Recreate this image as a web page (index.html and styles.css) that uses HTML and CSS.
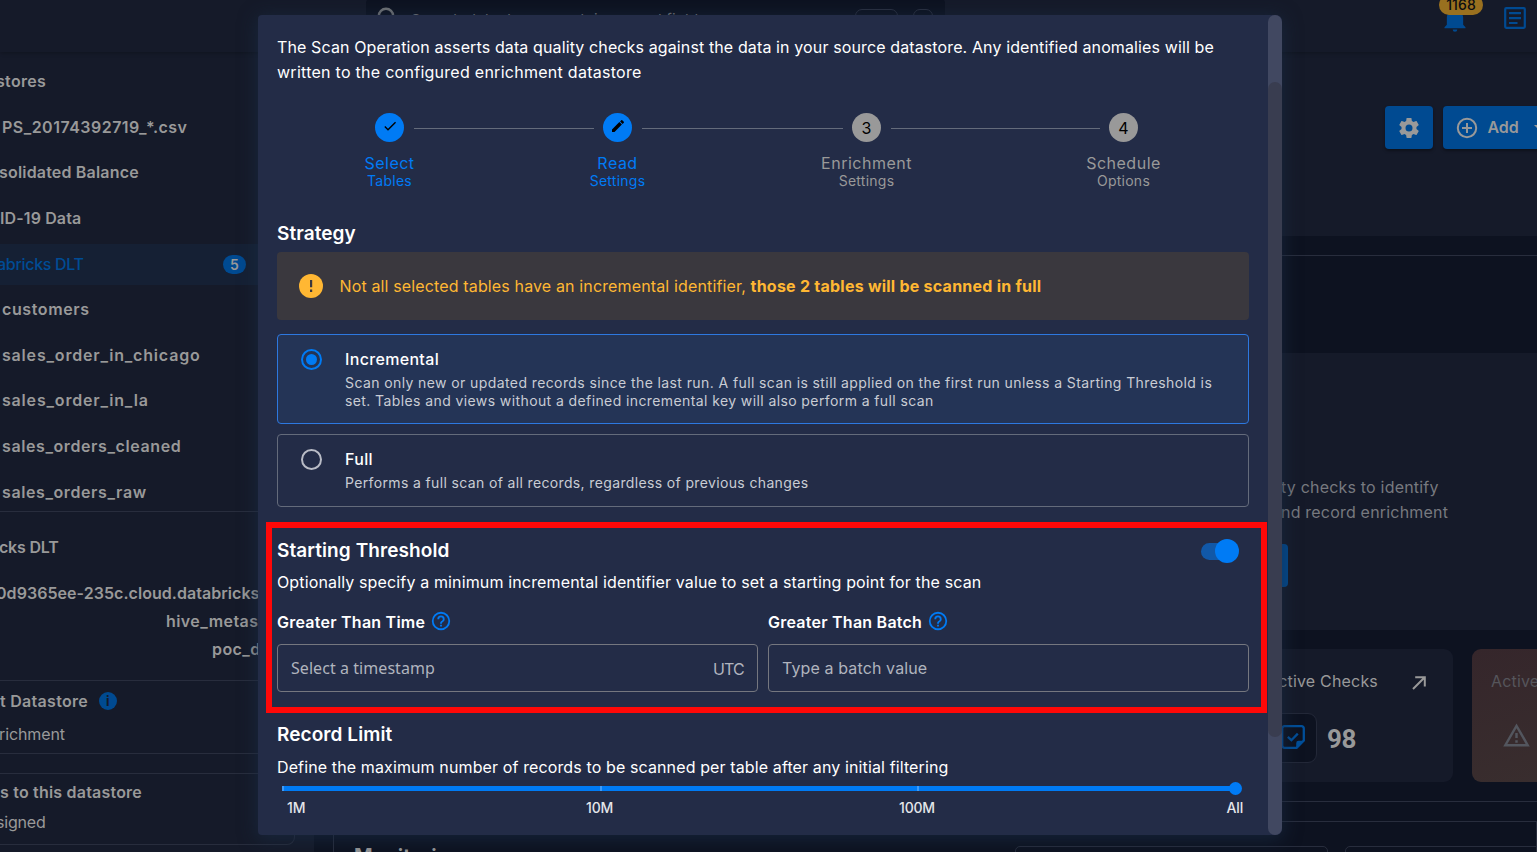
FILE: index.html
```html
<!DOCTYPE html>
<html lang="en">
<head>
<meta charset="utf-8">
<title>Scan Operation</title>
<link rel="stylesheet" href="styles.css">
</head>
<body>
<div class="app">
  <header class="topbar">
    <div class="search">
      <svg class="search-icon" viewBox="0 0 24 24"><circle cx="10" cy="10" r="7.2"/><path d="M15.5 15.5 22 22"/></svg>
      <span class="search-text">Search datastores, containers and fields</span>
      <span class="key key-wide"></span><span class="key"></span>
    </div>
    <div class="bell">
      <svg viewBox="0 0 24 24"><path d="M21,19V20H3V19L5,17V11C5,7.9 7.03,5.17 10,4.29C10,4.19 10,4.1 10,4A2,2 0 0,1 12,2A2,2 0 0,1 14,4C14,4.1 14,4.19 14,4.29C16.97,5.17 19,7.9 19,11V17L21,19M14,21A2,2 0 0,1 12,23A2,2 0 0,1 10,21"/></svg>
      <span class="bell-count">1168</span>
    </div>
    <svg class="doc-icon" viewBox="0 0 22 22"><rect x="1.2" y="1.2" width="19.6" height="19.6" rx="1"/><path d="M5 6.2h12M5 11.2h12M5 16h8.5"/></svg>
  </header>
  <div class="body">
    <aside class="sidebar">
      <nav class="tree">
        <div class="row cut-a">stores</div>
        <div class="row file">PS_20174392719_*.csv</div>
        <div class="row cut-b">solidated Balance</div>
        <div class="row">ID-19 Data</div>
        <div class="row active"><span class="cut-c">abricks DLT</span><span class="count">5</span></div>
        <div class="row table">customers</div>
        <div class="row table long">sales_order_in_chicago</div>
        <div class="row table long">sales_order_in_la</div>
        <div class="row table">sales_orders_cleaned</div>
        <div class="row table">sales_orders_raw</div>
      </nav>
      <section class="store-info">
        <div class="info-title">cks DLT</div>
        <div class="host">0d9365ee-235c.cloud.databricks</div>
        <div class="meta">hive_metas</div>
        <div class="meta schema">poc_d</div>
      </section>
      <section class="enrich">
        <div class="enrich-title">t Datastore <span class="info">i</span></div>
        <div class="enrich-value">richment</div>
      </section>
      <section class="tags">
        <div class="tags-title">s to this datastore</div>
        <div class="tags-value">signed</div>
      </section>
    </aside>
    <main class="main">
      <section class="page-head">
        <button class="btn gear"><svg viewBox="0 0 24 24"><path d="M12,15.5A3.5,3.5 0 0,1 8.5,12A3.5,3.5 0 0,1 12,8.5A3.5,3.5 0 0,1 15.5,12A3.5,3.5 0 0,1 12,15.5M19.43,12.97C19.47,12.65 19.5,12.33 19.5,12C19.5,11.67 19.47,11.34 19.43,11L21.54,9.37C21.73,9.22 21.78,8.95 21.66,8.73L19.66,5.27C19.54,5.05 19.27,4.96 19.05,5.05L16.56,6.05C16.04,5.66 15.5,5.32 14.87,5.07L14.5,2.42C14.46,2.18 14.25,2 14,2H10C9.75,2 9.54,2.18 9.5,2.42L9.13,5.07C8.5,5.32 7.96,5.66 7.44,6.05L4.95,5.05C4.73,4.96 4.46,5.05 4.34,5.27L2.34,8.73C2.21,8.95 2.27,9.22 2.46,9.37L4.57,11C4.53,11.34 4.5,11.67 4.5,12C4.5,12.33 4.53,12.65 4.57,12.97L2.46,14.63C2.27,14.78 2.21,15.05 2.34,15.27L4.34,18.73C4.46,18.95 4.73,19.03 4.95,18.95L7.44,17.94C7.96,18.34 8.5,18.68 9.13,18.93L9.5,21.58C9.54,21.82 9.75,22 10,22H14C14.25,22 14.46,21.82 14.5,21.58L14.87,18.93C15.5,18.67 16.04,18.34 16.56,17.94L19.05,18.95C19.27,19.03 19.54,18.95 19.66,18.73L21.66,15.27C21.78,15.05 21.73,14.78 21.54,14.63L19.43,12.97Z"/></svg></button>
        <button class="btn add"><svg class="plus" viewBox="0 0 22 22"><circle cx="11" cy="11" r="9.2"/><path d="M11 6v10M6 11h10"/></svg><span>Add</span><svg class="chev" viewBox="0 0 10 6"><path d="M0 0h10L5 5z"/></svg></button>
      </section>
      <div class="strip"></div>
      <section class="panel">
        <p class="panel-text">ty checks to identify<br>nd record enrichment</p>
        <div class="panel-btn"></div>
      </section>
      <section class="stats">
        <div class="stat">
          <div class="stat-head"><span>Active Checks</span><svg viewBox="0 0 14 14"><path d="M1 13 12.5 1.5M3.2 1.2h9.6v9.4"/></svg></div>
          <div class="stat-body">
            <div class="stat-icon"><svg viewBox="0 0 24 24"><path class="note" d="M15.6 22.8H3.4A2.2 2.2 0 0 1 1.2 20.6V3.4A2.2 2.2 0 0 1 3.4 1.2h17.2a2.2 2.2 0 0 1 2.2 2.2v12.2z"/><path class="fold" d="M15.2 23.5v-5.3a2.4 2.4 0 0 1 2.4-2.4h6z"/><path class="tick" d="m6.8 11.8 3.6 3.4 6.4-6.6"/></svg></div>
            <span class="stat-num">98</span>
          </div>
        </div>
        <div class="stat anomalies">
          <div class="stat-head">Active Anomalies</div>
          <svg class="warn" viewBox="0 0 24 24"><path d="M12,2L1,21H23M12,6L19.53,19H4.47M11,10V14H13V10M11,16V18H13V16"/></svg>
        </div>
      </section>
      <section class="monitor-wrap">
        <div class="monitor">
          <span class="monitor-title">Monitoring</span>
          <div class="tile tile-a"></div>
          <div class="tile tile-b"></div>
        </div>
      </section>
    </main>
  </div>

  <div class="dialog">
    <div class="content">
      <p class="intro">The Scan Operation asserts data quality checks against the data in your source datastore. Any identified anomalies will be<br><span class="intro-2">written to the configured enrichment datastore</span></p>
      <div class="stepper">
        <div class="step done">
          <div class="dot"><svg viewBox="0 0 24 24"><path d="M21,7L9,19L3.5,13.5L4.91,12.09L9,16.17L19.59,5.59L21,7Z"/></svg></div>
          <div class="step-1">Select</div><div class="step-2">Tables</div>
        </div>
        <div class="line line-a"></div>
        <div class="step done">
          <div class="dot"><svg class="pencil" viewBox="0 0 24 24"><path d="M20.71,7.04C21.1,6.65 21.1,6 20.71,5.63L18.37,3.29C18,2.9 17.35,2.9 16.96,3.29L15.12,5.12L18.87,8.87M3,17.25V21H6.75L17.81,9.93L14.06,6.18L3,17.25Z"/></svg></div>
          <div class="step-1">Read</div><div class="step-2">Settings</div>
        </div>
        <div class="line line-b"></div>
        <div class="step">
          <div class="dot">3</div>
          <div class="step-1">Enrichment</div><div class="step-2">Settings</div>
        </div>
        <div class="line line-c"></div>
        <div class="step">
          <div class="dot">4</div>
          <div class="step-1">Schedule</div><div class="step-2">Options</div>
        </div>
      </div>

      <h2 class="title">Strategy</h2>
      <div class="alert">
        <svg viewBox="0 0 24 24"><circle cx="12" cy="12" r="12"/><path d="M11 6h2.2v7.2H11zM11 15.6h2.2v2.3H11z"/></svg>
        <span>Not all selected tables have an incremental identifier, <b>those 2 tables will be scanned in full</b></span>
      </div>
      <div class="option selected">
        <span class="radio"></span>
        <div>
          <div class="option-name">Incremental</div>
          <div class="option-desc">Scan only new or updated records since the last run. A full scan is still applied on the first run unless a Starting Threshold is<br>set. Tables and views without a defined incremental key will also perform a full scan</div>
        </div>
      </div>
      <div class="option">
        <span class="radio"></span>
        <div>
          <div class="option-name">Full</div>
          <div class="option-desc option-full">Performs a full scan of all records, regardless of previous changes</div>
        </div>
      </div>

      <div class="threshold-head"><h2 class="title">Starting Threshold</h2><span class="toggle"><i></i></span></div>
      <p class="text">Optionally specify a minimum incremental identifier value to set a starting point for the scan</p>
      <div class="fields">
        <div class="field">
          <label>Greater Than Time <svg viewBox="0 0 24 24"><path d="M11,18H13V16H11V18M12,2A10,10 0 0,0 2,12A10,10 0 0,0 12,22A10,10 0 0,0 22,12A10,10 0 0,0 12,2M12,20C7.59,20 4,16.41 4,12C4,7.59 7.59,4 12,4C16.41,4 20,7.59 20,12C20,16.41 16.41,20 12,20M12,6A4,4 0 0,0 8,10H10A2,2 0 0,1 12,8A2,2 0 0,1 14,10C14,12 11,11.75 11,15H13C13,12.75 16,12.5 16,10A4,4 0 0,0 12,6Z"/></svg></label>
          <div class="input"><span class="stamp">Select a timestamp</span><span class="utc">UTC</span></div>
        </div>
        <div class="field">
          <label>Greater Than Batch <svg viewBox="0 0 24 24"><path d="M11,18H13V16H11V18M12,2A10,10 0 0,0 2,12A10,10 0 0,0 12,22A10,10 0 0,0 22,12A10,10 0 0,0 12,2M12,20C7.59,20 4,16.41 4,12C4,7.59 7.59,4 12,4C16.41,4 20,7.59 20,12C20,16.41 16.41,20 12,20M12,6A4,4 0 0,0 8,10H10A2,2 0 0,1 12,8A2,2 0 0,1 14,10C14,12 11,11.75 11,15H13C13,12.75 16,12.5 16,10A4,4 0 0,0 12,6Z"/></svg></label>
          <div class="input">Type a batch value</div>
        </div>
      </div>

      <h2 class="title limit">Record Limit</h2>
      <p class="text limit-text">Define the maximum number of records to be scanned per table after any initial filtering</p>
      <div class="slider"><i class="tick-mark"></i><i class="tick-mark"></i><i class="tick-mark"></i><span class="thumb"></span></div>
      <div class="scale"><span>1M</span><span>10M</span><span>100M</span><span>All</span></div>
    </div>
    <div class="scrollbar"><div class="scroll-thumb"></div></div>
  </div>
  <div class="highlight"></div>
</div>
</body>
</html>
```
FILE: styles.css
```css
* { box-sizing: border-box; }
html, body { margin: 0; height: 100%; overflow: hidden; }
body { font: 400 16px/24px Inter, "Liberation Sans", sans-serif; letter-spacing: .12px; background: #0d1220; color: #fff; }
p, h2 { margin: 0; }
svg { display: block; flex: none; }
.app { position: relative; width: 1537px; height: 852px; overflow: hidden; display: flex; flex-direction: column; white-space: nowrap; color: #999; }

/* top bar */
.topbar { height: 52px; flex: none; background: #151a29; display: flex; box-shadow: 0 1px 4px rgba(0,0,0,.25); position: relative; padding-left: 366px; }
.search { width: 579px; height: 40px; margin-top: -2px; background: #0d1220; border-radius: 5px; display: flex; color: #737578; font-size: 15px; padding-left: 10px; flex: none; }
.search-icon { width: 24px; height: 24px; margin-top: 8px; fill: none; stroke: #737578; stroke-width: 2.4; }
.search-text { margin: 10px 0 0 11px; letter-spacing: .25px; width: 444px; }
.key { width: 20px; height: 24px; margin-top: 11px; border: 1px solid #2b3040; border-radius: 7px; }
.key-wide { width: 43px; margin-right: 15px; }
.bell { margin: 5px 0 0 496px; width: 28px; height: 28px; position: relative; }
.bell svg { width: 28px; height: 28px; fill: #004a91; }
.bell-count { position: absolute; left: -2px; top: -10px; width: 44px; height: 20px; border-radius: 10px; background: #99701f; color: #0b0c10; font: 500 14px/20px Inter, sans-serif; text-align: center; }
.doc-icon { width: 22px; height: 22px; margin: 7px 0 0 35px; fill: none; stroke: #004a91; stroke-width: 2.2; }
.body { flex: 1; display: flex; min-height: 0; }

/* sidebar */
.sidebar { width: 314px; flex: none; background: #151a29; padding-top: 9.2px; }
.tree { display: flex; flex-direction: column; gap: 4.6px; height: 449.8px; }
.row { height: 41px; flex: none; line-height: 41px; font-weight: 600; }
.cut-a { text-indent: -4px; letter-spacing: .3px; }
.cut-b { text-indent: -1px; letter-spacing: .18px; }
.file { padding-left: 2px; letter-spacing: .48px; }
.table { padding-left: 2px; letter-spacing: .6px; }
.table.long { letter-spacing: .82px; }
.active { background: #152034; color: #004c95; display: flex; align-items: center; }
.cut-c { width: 226px; margin-left: -3px; font-weight: 500; letter-spacing: -.3px; }
.count { width: 23px; height: 19px; border-radius: 10px; background: #004a91; color: #999; font-size: 14px; line-height: 19px; text-align: center; }
.store-info { border-top: 1px solid #282d3d; height: 169px; font-weight: 600; padding-top: 23px; }
.info-title { text-indent: -1px; letter-spacing: -.2px; height: 46px; }
.host { text-indent: -4px; letter-spacing: .05px; height: 28px; width: 258px; }
.meta { padding-left: 166px; height: 28px; letter-spacing: .42px; }
.schema { padding-left: 212px; }
.enrich { border-top: 1px solid #282d3d; border-bottom: 1px solid #282d3d; height: 74px; padding-top: 8px; }
.enrich-title { display: flex; font-weight: 600; gap: 11px; letter-spacing: .29px; height: 33px; }
.info { width: 18px; height: 18px; border-radius: 50%; background: #004a91; color: #151a29; font: 700 13px/18px Inter, sans-serif; text-align: center; margin-top: 3px; }
.enrich-value { text-indent: -1px; letter-spacing: -.1px; }
.tags { border: 1px solid #282d3d; border-left: 0; border-radius: 0 8px 8px 0; width: 295px; height: 72px; margin-top: 19px; padding-top: 6px; }
.tags-title { font-weight: 600; letter-spacing: .2px; height: 30px; }
.tags-value { text-indent: -4px; letter-spacing: -.2px; }

/* page */
.main { flex: 1; min-width: 0; overflow: hidden; }
.page-head { height: 184px; background: #151a29; padding: 54px 0 0 1071px; display: flex; gap: 10px; }
.btn { height: 43px; border: 0; border-radius: 4px; background: #004a91; color: #999; display: flex; align-items: center; flex: none; box-shadow: 0 2px 3px rgba(0,0,0,.35); font: 600 16px Inter, sans-serif; padding: 0; }
.gear { width: 48px; justify-content: center; }
.gear svg { width: 24px; height: 24px; fill: #999; }
.add { width: 130px; padding-left: 13px; }
.plus { width: 22px; height: 22px; fill: none; stroke: #999; stroke-width: 2; }
.add span { margin: -2px 15px 0 9px; width: 32px; letter-spacing: -.1px; }
.chev { width: 10px; height: 6px; fill: #999; }
.strip { height: 98px; margin: 19px 0 0; border-top: 1px solid #282d3d; }
.panel { height: 277px; background: #151a29; padding: 122px 0 0 967px; }
.panel-text { color: #77797f; line-height: 25px; letter-spacing: .2px; }
.panel-btn { width: 7px; height: 43px; margin-top: 19px; background: #004a91; border-radius: 0 4px 4px 0; }
.stats { display: flex; gap: 19px; padding: 19px 0 0 866px; }
.stat { width: 273px; height: 133px; flex: none; background: #151a29; border-radius: 9px; padding: 20px 27px 0 87px; }
.stat-head { display: flex; justify-content: space-between; align-items: center; letter-spacing: .18px; height: 24px; }
.stat-head svg { width: 14px; height: 14px; fill: none; stroke: #999; stroke-width: 2; margin-top: 3px; }
.stat-body { display: flex; align-items: center; margin-top: 20px; gap: 10px; }
.stat-icon { width: 50px; height: 50px; border: 1px solid #232838; border-radius: 9px; background: #0d1220; display: grid; place-items: center; }
.stat-icon svg { width: 24px; height: 24px; margin: -3px 0 0 1px; fill: none; stroke: #004f9a; stroke-width: 2.3; }
.stat-icon .fold { fill: #004f9a; stroke: none; }
.stat-num { font: 700 26px/30px Roboto, sans-serif; letter-spacing: -.3px; padding-top: 1px; }
.anomalies { background: linear-gradient(165deg, #35262b, #3a302f); padding-left: 19px; color: #55555b; }
.warn { width: 29px; height: 29px; margin: 28px 0 0 11px; fill: #53565e; }
.monitor-wrap { border-top: 1px solid #282d3d; margin-top: 19px; padding: 19px 0 0 19px; }
.monitor { height: 100px; border: 1px solid #282d3d; display: flex; }
.monitor-title { font: 700 20px/24px Inter, sans-serif; margin: 22px 0 0 20px; width: 661px; flex: none; }
.tile { width: 313px; height: 60px; margin-top: 24px; border: 1px solid #282d3d; border-radius: 5px; flex: none; }
.tile-b { margin-left: 17px; }

/* dialog */
.dialog { position: absolute; left: 258px; top: 15px; width: 1024px; height: 820px; background: #232c47; border-radius: 4px 6px 6px 4px; box-shadow: 0 3px 18px 1px rgba(26,44,68,.7); display: flex; color: #fff; }
.content { width: 1010px; padding: 19.5px 19px 0; }
.intro { line-height: 25px; }
.intro-2 { letter-spacing: .27px; }
.stepper { display: flex; height: 108.5px; margin: 28px 0 0 88.5px; color: #999; }
.step { width: 48px; display: flex; flex-direction: column; align-items: center; flex: none; }
.dot { width: 29px; height: 29px; border-radius: 50%; background: #999; color: #000; font-weight: 400; line-height: 30px; text-align: center; display: grid; place-items: center; margin-bottom: 12px; flex: none; }
.dot svg { width: 16px; height: 16px; fill: #000; margin-top: -2px; }
.done .dot { background: #007bf5; }
.done { color: #007bf5; }
.step-1 { line-height: 19px; letter-spacing: .5px; margin-bottom: -1px; }
.step-2 { font-size: 14px; line-height: 18px; letter-spacing: .25px; }
.line { height: 1px; background: #646b7b; margin-top: 15px; flex: none; }
.line-a { width: 180px; }
.line-b { width: 201px; }
.line-c { width: 209px; }
.title { font-size: 19px; font-weight: 600; line-height: 26px; letter-spacing: .08px; }
.alert { height: 68px; margin-top: 5px; border-radius: 4px; background: #3a383e; color: #ffb733; display: flex; align-items: center; padding-left: 22px; gap: 16.5px; letter-spacing: .14px; }
.alert svg { width: 24px; height: 24px; margin-top: -1px; fill: #ffb733; }
.alert svg path { fill: #3a383e; }
.alert b { letter-spacing: .24px; }
.option { border: 1px solid #646b7b; border-radius: 4px; height: 73px; margin-top: 10px; display: flex; padding: 12px 0 0 23px; }
.option.selected { height: 90px; margin-top: 14px; border-color: #2d78e0; background: #243456; }
.radio { width: 21px; height: 21px; border: 2px solid #b9bcc6; border-radius: 50%; margin: 2px 23px 0 0; display: grid; place-items: center; flex: none; }
.selected .radio { border-color: #007bf5; }
.selected .radio::after { content: ""; width: 11px; height: 11px; border-radius: 50%; background: #007bf5; }
.option-name { font-weight: 500; letter-spacing: .33px; height: 27px; }
.option-desc { font-size: 14px; line-height: 18px; letter-spacing: .4px; color: #c9ccd4; }
.option-full { letter-spacing: .36px; }
.threshold-head { display: flex; justify-content: space-between; align-items: center; margin-top: 31px; }
.toggle { width: 35px; height: 17px; border-radius: 9px; background: #1158a8; margin: 0 13px 0 0; display: flex; align-items: center; justify-content: flex-end; }
.toggle i { width: 24px; height: 24px; border-radius: 50%; background: #007bf5; margin-right: -3px; flex: none; }
.text { letter-spacing: .14px; margin-top: 6px; }
.fields { display: flex; gap: 10px; margin-top: 16px; }
.field { flex: 1; }
.field label { display: flex; align-items: center; gap: 4.5px; font-weight: 600; letter-spacing: .24px; height: 24px; }
.field label svg { width: 22px; height: 22px; fill: #007bf5; margin-top: -2px; }
.input { height: 48px; margin-top: 10px; border: 1px solid #75777f; border-radius: 4px; padding: 0 13px; display: flex; align-items: center; justify-content: space-between; color: #b0b4be; }
.stamp { font-family: "Noto Sans", sans-serif; letter-spacing: .06px; }
.utc { letter-spacing: -.8px; padding-top: 1px; }
.limit { margin-top: 30px; }
.limit-text { margin-top: 7px; letter-spacing: .12px; }
.slider { width: 953px; height: 5px; margin: 7px 0 0 5px; background: #007bf5; border-radius: 1px; display: flex; position: relative; }
.tick-mark { width: 2px; height: 5px; background: #3f9bf8; margin-right: 315.5px; }
.thumb { position: absolute; right: -7px; top: -4px; width: 13px; height: 13px; border-radius: 50%; background: #007bf5; }
.scale { display: flex; font-size: 14px; font-weight: 500; line-height: 20px; margin: 7px 6px 0 10px; color: #e4e6ea; letter-spacing: -.17px; }
.scale span:nth-child(1) { width: 299px; }
.scale span:nth-child(2) { width: 313px; }
.scale span:nth-child(3) { flex: 1; }
.scrollbar { width: 14px; background: #414861; border-radius: 7px; padding-top: 67px; }
.scroll-thumb { height: 655px; border-radius: 7px; background: #393d50; }
.highlight { position: absolute; left: 266px; top: 522px; width: 1001px; height: 191px; border: 6px solid #ff0808; }
```
